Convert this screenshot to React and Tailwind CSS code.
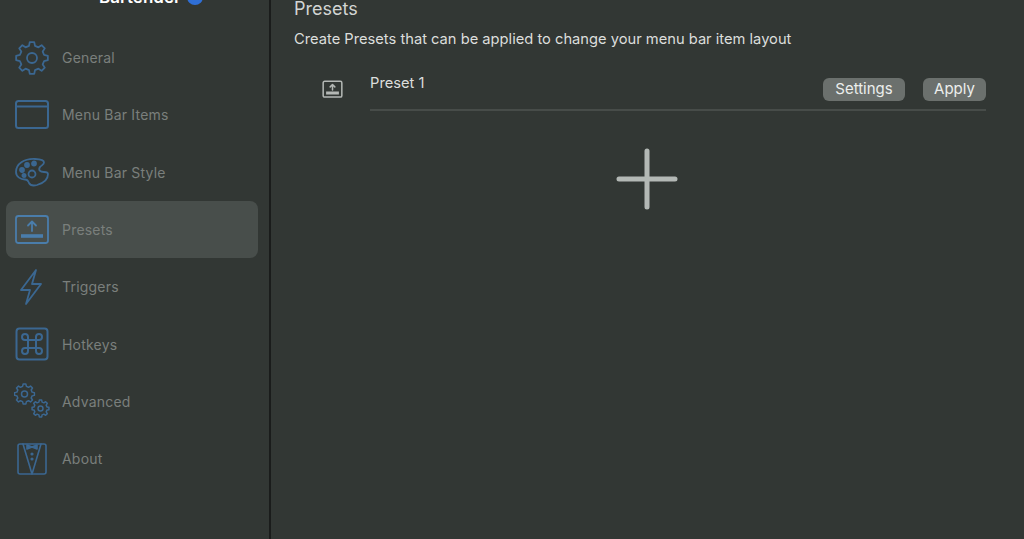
const iconColor = '#3b6791';

const GearShape = ({ cx, cy, r, hole }) => {
    const teeth = [0, 45, 90, 135, 180, 225, 270, 315];
    const pts = [];
    teeth.forEach((deg) => {
        [-14, -8, 8, 14].forEach((off, i) => {
            const rad = ((deg + off) * Math.PI) / 180;
            const rr = i === 0 || i === 3 ? r * 0.78 : r;
            pts.push(`${(cx + rr * Math.sin(rad)).toFixed(2)},${(cy - rr * Math.cos(rad)).toFixed(2)}`);
        });
    });
    return (
        <>
            <polygon points={pts.join(' ')} strokeLinejoin="round" />
            <circle cx={cx} cy={cy} r={hole} />
        </>
    );
};

const Svg = ({ children, sw = 1.8 }) => (
    <svg width="36" height="36" viewBox="0 0 36 36" fill="none" stroke={iconColor} strokeWidth={sw} strokeLinecap="round" strokeLinejoin="round">
        {children}
    </svg>
);

const GeneralIcon = () => (
    <Svg><GearShape cx={18} cy={18} r={16} hole={5} /></Svg>
);

const ItemsIcon = () => (
    <Svg sw={2}>
        <rect x="2" y="4" width="32" height="27" rx="2.5" />
        <path d="M2 9.5h32" />
    </Svg>
);

const PaletteIcon = () => (
    <Svg>
        <path d="M21 5C10 4.500 2 10 2 18c0 5 5 7.500 9 7.500 3 0 3 1.500 4 3.500 1 2 4 3 8 2 7-2 11-5.500 11-11 0-2-2-2-4-2-4 0-6-2-4-5 2-2 4-2.500 4-4.500 0-2-4-3.300-9-3.500z" />
        <circle cx="18" cy="20" r="3.500" />
        <circle cx="8" cy="16" r="2" fill={iconColor} />
        <circle cx="13" cy="11" r="2" fill={iconColor} />
        <circle cx="20" cy="9.500" r="2" fill={iconColor} />
        <circle cx="10" cy="21.500" r="1.600" fill={iconColor} />
    </Svg>
);

const PresetGlyph = ({ color, size, sw }) => (
    <svg width={size} height={size} viewBox="0 0 36 36" fill="none" stroke={color} strokeWidth={sw} strokeLinecap="round" strokeLinejoin="round">
        <rect x="2" y="4" width="32" height="27" rx="2.5" />
        <path d="M18 19V10M14 13.5l4-4 4 4" />
        <path d="M7 24h22" strokeWidth={sw * 2} strokeLinecap="butt" />
    </svg>
);

const BoltIcon = () => (
    <Svg>
        <path d="M22 1 7 21h9l-4 14 15-20h-9l4-14z" />
    </Svg>
);

const HotkeyIcon = () => (
    <Svg sw={2}>
        <rect x="2.5" y="2.5" width="31" height="31" rx="3" />
        <path d="M14 14h8v8h-8zM14 14v-3a3 3 0 1 0-3 3h3zM22 14v-3a3 3 0 1 1 3 3h-3zM14 22v3a3 3 0 1 1-3-3h3zM22 22v3a3 3 0 1 0 3-3h-3z" />
    </Svg>
);

const AdvancedIcon = () => (
    <Svg sw={1.5}>
        <GearShape cx={10.5} cy={11} r={10} hole={3} />
        <GearShape cx={26.5} cy={25.5} r={8.5} hole={2.5} />
    </Svg>
);

const AboutIcon = () => (
    <Svg sw={1.6}>
        <path d="M6 3h24a2 2 0 0 1 2 2v26a2 2 0 0 1-2 2H6a2 2 0 0 1-2-2V5a2 2 0 0 1 2-2z" />
        <path d="M9 3l9 30 9-30" />
        <path d="M13 4l5 2 5-2v4l-5-2-5 2z" fill={iconColor} />
        <circle cx="18" cy="13" r=".8" fill={iconColor} />
        <circle cx="18" cy="18" r=".8" fill={iconColor} />
    </Svg>
);

const navItems = [
    { label: 'General', icon: <GeneralIcon /> },
    { label: 'Menu Bar Items', icon: <ItemsIcon /> },
    { label: 'Menu Bar Style', icon: <PaletteIcon /> },
    { label: 'Presets', icon: <PresetGlyph color="#4a7dab" size={36} sw={1.8} />, active: true },
    { label: 'Triggers', icon: <BoltIcon /> },
    { label: 'Hotkeys', icon: <HotkeyIcon /> },
    { label: 'Advanced', icon: <AdvancedIcon /> },
    { label: 'About', icon: <AboutIcon /> },
];

const App = () => {
    return (
        <div className="flex h-[539px] w-full overflow-hidden bg-[#323734] font-['Inter','Liberation_Sans',sans-serif]">
            <aside className="w-[269px] shrink-0 flex flex-col">
                <div className="h-[29px] relative overflow-hidden">
                    <div className="absolute left-[99px] top-[-13px] flex items-center gap-[6px]">
                        <span className="text-[17px] leading-[20px] font-semibold text-white">Bartender</span>
                        <span className="w-[16px] h-[16px] rounded-full bg-[#2f6fd6]" />
                    </div>
                </div>
                <nav className="flex flex-col pl-[6px] pr-[11px]">
                    {navItems.map((item) => (
                        <div
                            key={item.label}
                            className={`h-[57.3px] shrink-0 flex items-center pl-[8px] rounded-lg ${item.active ? 'bg-[#484e4b]' : ''}`}
                        >
                            <span className="w-[36px] h-[36px] shrink-0 flex items-center justify-center">{item.icon}</span>
                            <span className="ml-[12px] text-[14px] tracking-[0.2px] text-[#7a7f7c]">{item.label}</span>
                        </div>
                    ))}
                </nav>
            </aside>

            <div className="w-[2px] shrink-0 bg-[#1a1c1b]" />

            <main className="flex-1 min-w-0 flex flex-col pl-[23px] pr-[38px]">
                <h1 className="-mt-[2px] text-[18px] leading-[22px] font-normal text-[#d2d5d3]">Presets</h1>
                <p className="mt-[9px] text-[14.7px] leading-[20px] text-[#dcdedc]">
                    Create Presets that can be applied to change your menu bar item layout
                </p>

                <div className="mt-[12px] flex">
                    <div className="w-[76px] shrink-0 h-[50px] flex items-center justify-center pl-[1px] pt-[7px]">
                        <PresetGlyph color="#b4b8b5" size={21} sw={2.6} />
                    </div>
                    <div className="flex-1 h-[50px] flex justify-between border-b-2 border-[#474c49]">
                        <span className="mt-[12px] text-[14.7px] leading-[20px] text-[#dcdedc]">Preset 1</span>
                        <div className="mt-[17px] flex gap-[18px] h-[23px]">
                            <button className="w-[82px] rounded-md bg-[#6b706d] text-[15px] text-[#eceeec]">Settings</button>
                            <button className="w-[63px] rounded-md bg-[#6b706d] text-[15px] text-[#eceeec]">Apply</button>
                        </div>
                    </div>
                </div>

                <div className="mt-[37px] flex justify-center pl-[14px]">
                    <svg width="62" height="62" viewBox="0 0 62 62" fill="none" stroke="#b3b8b5" strokeWidth="5" strokeLinecap="round">
                        <path d="M31 3v56M3 31h56" />
                    </svg>
                </div>
            </main>
        </div>
    );
};

export default App;
